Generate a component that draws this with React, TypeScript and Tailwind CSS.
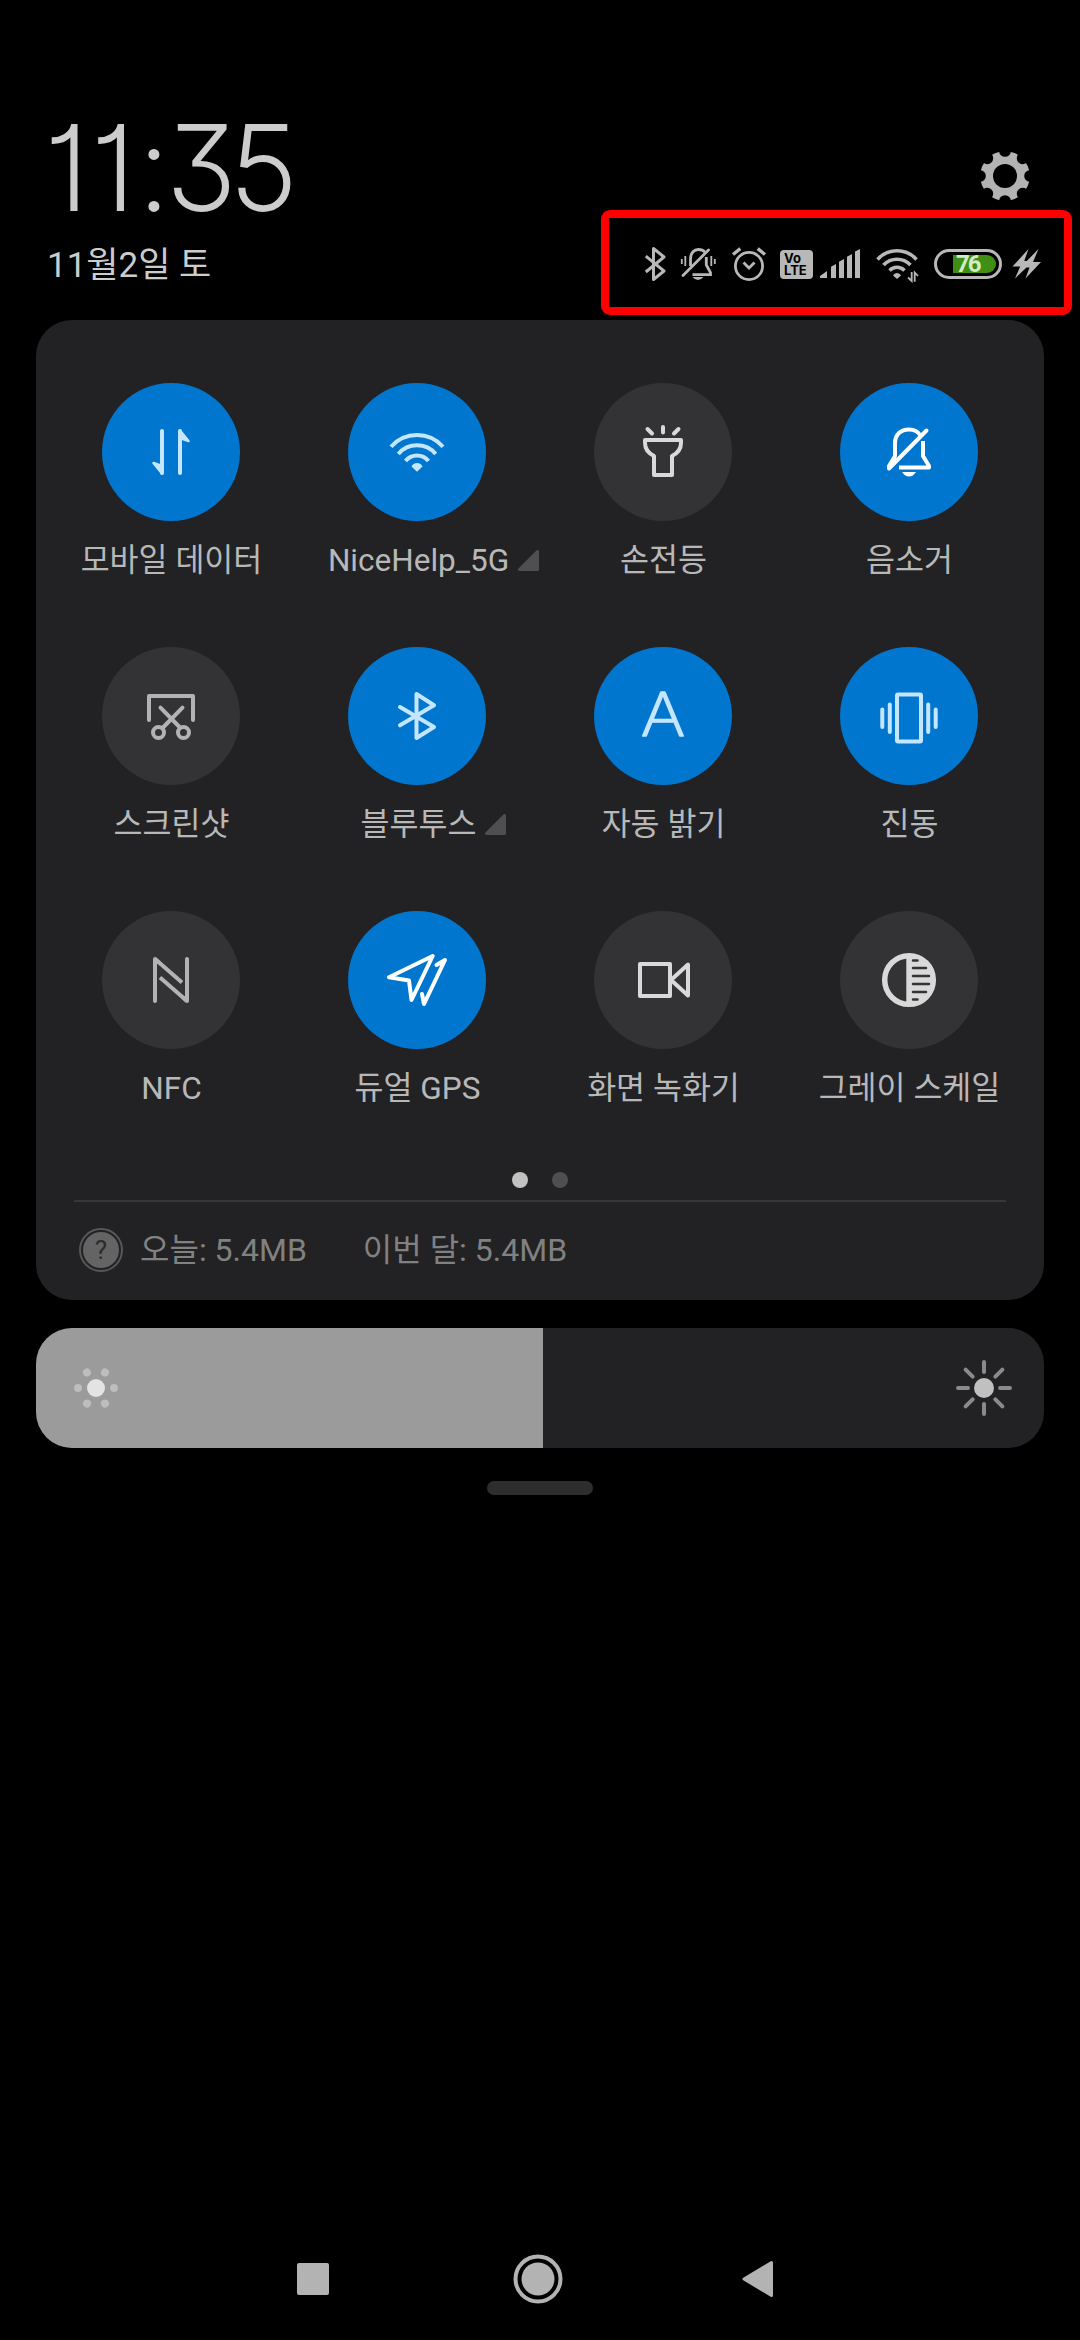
import React from "react";
import clsx from "clsx";

interface Tile {
  label: string;
  icon: React.ReactNode;
  active?: boolean;
  tone: string;
  expandable?: boolean;
}

const tiles: Tile[] = [
  {
    label: "모바일 데이터",
    active: true,
    tone: "text-[#c5e6ff]",
    icon: (
      <>
        <path d="M-9 -21V21M9 21V-21" />
        <path d="M-17.5 11L-9 21.5V14ZM17.5 -11L9 -21.5V-14Z" fill="currentColor" strokeWidth="2.5" />
      </>
    ),
  },
  {
    label: "NiceHelp_5G",
    active: true,
    expandable: true,
    tone: "text-[#c5e6ff]",
    icon: (
      <>
        <path
          d="M-26 -5.3A34.7 34.7 0 0 1 26 -5.3M-18.7 2A24.5 24.5 0 0 1 18.7 2M-11.5 9A14.8 14.8 0 0 1 11.5 9"
          strokeLinecap="butt"
        />
        <path d="M0 19.8L-5.5 14.5Q-4 11 0 11Q4 11 5.5 14.5Z" fill="currentColor" stroke="none" />
      </>
    ),
  },
  {
    label: "손전등",
    tone: "text-[#d9d9d9]",
    icon: (
      <>
        <path d="M-15.5 -23L-11 -18.5M0 -25V-19.5M15.5 -23L11 -18.5" />
        <path d="M-18 -12H18V-9C18 -2 13 2 9 4V23H-9V4C-13 2 -18 -2 -18 -9Z" />
      </>
    ),
  },
  {
    label: "음소거",
    active: true,
    tone: "text-white",
    icon: (
      <>
        <path d="M17.5 -21.5L-20 16.5V14L-14 4V-9C-14 -17.5 -8 -22.5 0 -22.5C5 -22.5 9 -20.5 11.5 -16.5" />
        <path d="M14 -11V4L20 14V15.5H-10" strokeLinecap="butt" />
        <path d="M-7 20H7Q4 24.5 0 24.5Q-4 24.5 -7 20Z" fill="currentColor" stroke="none" />
      </>
    ),
  },
  {
    label: "스크린샷",
    tone: "text-[#b3b3b3]",
    icon: (
      <>
        <path d="M-22 4V-20H22V4" />
        <path d="M-10.5 -8.3L9 11.5M11.5 -8.3L-8 11.5" />
        <circle cx="-12.5" cy="16.5" r="5.5" />
        <circle cx="12.5" cy="16.5" r="5.5" />
      </>
    ),
  },
  {
    label: "블루투스",
    active: true,
    expandable: true,
    tone: "text-[#c5e6ff]",
    icon: <path d="M-17 -9L17 11L-.5 22V-22L17 -10.7L-17 9.3" />,
  },
  {
    label: "자동 밝기",
    active: true,
    tone: "text-[#c5e6ff]",
    icon: (
      <text
        x="0"
        y="20"
        textAnchor="middle"
        fill="currentColor"
        strokeWidth="1.5"
        transform="scale(1.13 1)"
        className="font-['Inter',sans-serif] text-[60px] font-extralight"
      >
        A
      </text>
    ),
  },
  {
    label: "진동",
    active: true,
    tone: "text-[#c5e6ff]",
    icon: (
      <>
        <rect x="-12" y="-21.5" width="24" height="47" rx="1" />
        <path d="M-26.7 -6.5V11M-19.2 -11.5V16M19.2 -11.5V16M26.7 -6.5V11" />
      </>
    ),
  },
  {
    label: "NFC",
    tone: "text-[#b3b3b3]",
    icon: (
      <>
        <path d="M-16 21V-21L-12 -17.5M16 -21V21L12 17.5" />
        <path d="M-16 -21L11 2.5M16 21L-11 -2.5" strokeLinecap="butt" />
      </>
    ),
  },
  {
    label: "듀얼 GPS",
    active: true,
    tone: "text-white",
    icon: (
      <>
        <path d="M15.7 -24L-28 -2.7L-8 .5L-5.5 20Z" />
        <path d="M19.5 -15L28 -20L7 24L5 14" />
      </>
    ),
  },
  {
    label: "화면 녹화기",
    tone: "text-[#d9d9d9]",
    icon: (
      <>
        <rect x="-23" y="-16" width="30" height="32" />
        <path d="M8 0L25 -15.5V15.5Z" />
      </>
    ),
  },
  {
    label: "그레이 스케일",
    tone: "text-[#d9d9d9]",
    icon: (
      <>
        <circle r="24.3" strokeWidth="5.5" />
        <path d="M-2.7 -24H0A24 24 0 0 1 0 24H-2.7Z" fill="currentColor" stroke="none" />
        <path
          d="M4 -19.5H8.5M4 -12H17M4 -4H20M4 4H20M4 12H17M4 19.5H8.5"
          stroke="#333335"
          strokeWidth="2.5"
        />
      </>
    ),
  },
];

const SettingsIcon = () => (
  <svg width="50" height="50" viewBox="-25 -25 50 50">
    <mask id="gear">
      <circle r="24.8" fill="white" />
      <circle r="12" fill="black" />
      {[0, 45, 90, 135, 180, 225, 270, 315].map((angle) => (
        <ellipse key={angle} cy="-24.5" rx="5.8" ry="5.3" fill="black" transform={`rotate(${angle})`} />
      ))}
    </mask>
    <rect x="-25" y="-25" width="50" height="50" fill="#b3b3b3" mask="url(#gear)" />
  </svg>
);

const StatusBar = () => (
  <div className="flex items-start w-[471px] h-[105px] pt-7 pl-[35px] border-8 border-[#ff0000] rounded-[9px] text-[#b8b8b8]">
    <svg width="22" height="36" fill="none" stroke="currentColor" strokeWidth="3" strokeLinejoin="round">
      <path d="M1.8 10.2L20 25L9.5 33.5V2.5L20 11L1.8 26" />
    </svg>
    <svg width="36" height="36" fill="none" stroke="currentColor" strokeWidth="2.8" className="ml-3.5">
      <path d="M3 29.5L28.5 4" strokeLinecap="round" />
      <path d="M10.5 20V13C10.5 7 14 3.5 18.5 3.5C21.5 3.5 23.5 4.5 25 6M26.3 11V19L30.5 26.5V28.7H12.5" />
      <path d="M12.5 31H23.5Q21 34 18 34Q15 34 12.5 31Z" fill="currentColor" stroke="none" />
      <path d="M1.8 13V18M5.3 10V20M31.3 10V20M34.8 13V18" strokeWidth="1.8" />
    </svg>
    <svg width="36" height="36" fill="none" stroke="currentColor" strokeWidth="2.8" className="ml-[15px]">
      <circle cx="18" cy="20" r="13.6" />
      <path d="M2 8.5L9.3 2.6M34 8.5L26.7 2.6" strokeWidth="3.4" />
      <path d="M12.5 16.5L18 22L23.5 16.5" />
    </svg>
    <div className="flex flex-col w-[33px] h-[29px] mt-1 ml-[13px] pl-1 pt-[3px] rounded bg-[#b8b8b8] text-black font-['Inter',sans-serif] font-bold">
      <span className="text-[13px] leading-[11px]">Vo</span>
      <span className="text-[13px] leading-[13px]">LTE</span>
    </div>
    <svg width="41" height="36" fill="currentColor" className="ml-[7px]">
      <path d="M0 30L7 25V32H0ZM11 20.7L16 18V32H11ZM19 15.7L24 13V32H19ZM27 10.7L32 8V32H27ZM35 5.5L40 3V32H35Z" />
    </svg>
    <svg width="43" height="37" fill="none" stroke="currentColor" strokeWidth="3.5" className="ml-[15px]">
      <path d="M1.5 13.5A26 26 0 0 1 40.5 13.5M7.5 19A18.5 18.5 0 0 1 34.5 19M13.5 24.5A10.5 10.5 0 0 1 28.5 24.5" />
      <path d="M21 33L17 29.5Q18 27 21 27Q24 27 25 29.5Z" fill="currentColor" stroke="none" />
      <path d="M35.7 26V35L32 31.5M38.7 35.7V26.5L42 30" strokeWidth="1.8" />
    </svg>
    <div className="flex justify-end w-[68px] h-[30px] mt-[3px] ml-[15px] p-[3px] border-[3px] border-[#b8b8b8] rounded-full">
      <div className="w-[43px] h-[18px] pl-[3px] rounded-l-[1px] rounded-r-full bg-[#3e8f14] text-[#d3ebc6] font-['Roboto',sans-serif] text-[24px] leading-[19px] tracking-[-2px] font-bold">
        76
      </div>
    </div>
    <svg width="29" height="36" fill="currentColor" className="ml-2.5">
      <path d="M16.5 3L.5 20.5H8.2L3 32.5L14.5 21.5H17.5L13.5 32.5L29 16H21L26.5 3L14.8 15H12.2Z" />
    </svg>
  </div>
);

const QuickTile = ({ label, icon, active, tone, expandable }: Tile) => (
  <div className="flex flex-col items-center h-[264px]">
    <div
      className={clsx(
        "flex items-center justify-center size-[138px] rounded-full",
        active ? "bg-[#0076cf]" : "bg-[#333335]",
        tone
      )}
    >
      <svg
        width="72"
        height="72"
        viewBox="-36 -36 72 72"
        fill="none"
        stroke="currentColor"
        strokeWidth="4"
        strokeLinecap="round"
        strokeLinejoin="round"
        className="overflow-visible"
      >
        {icon}
      </svg>
    </div>
    <div
      className={clsx(
        "relative mt-5 text-[31.5px] leading-10 text-[#b8b8b9] whitespace-nowrap",
        expandable ? "ml-[3px]" : "ml-px"
      )}
    >
      {label}
      {expandable && (
        <svg width="21" height="21" className="absolute left-full top-[9px] ml-[9px]">
          <path d="M1.5 19.5L19.5 1.5V19.5Z" fill="#4f4f51" stroke="#4f4f51" strokeWidth="3" strokeLinejoin="round" />
        </svg>
      )}
    </div>
  </div>
);

const Brightness = () => (
  <div className="flex h-[120px] mt-7 rounded-[36px] overflow-hidden bg-[#222224]">
    <div className="flex items-center w-[507px] pl-10 bg-[#9b9b9b]">
      <svg width="40" height="40" viewBox="-20 -20 40 40" className="overflow-visible">
        <circle r="9" fill="#e3e3e3" />
        {[0, 60, 120, 180, 240, 300].map((angle) => (
          <circle key={angle} cx="18" r="4" fill="#bdbdbd" transform={`rotate(${angle})`} />
        ))}
      </svg>
    </div>
    <div className="flex flex-1 items-center justify-end pr-8">
      <svg width="56" height="56" viewBox="-28 -28 56 56">
        <circle r="10" fill="#c0c0c0" />
        {[0, 45, 90, 135, 180, 225, 270, 315].map((angle) => (
          <path
            key={angle}
            d="M16 0H26"
            stroke="#8a8a8b"
            strokeWidth="4"
            strokeLinecap="round"
            transform={`rotate(${angle})`}
          />
        ))}
      </svg>
    </div>
  </div>
);

const NavBar = () => (
  <div className="flex items-center h-[123px] mt-auto pl-[297px] text-[#b3b3b3]">
    <div className="size-8 rounded-[2px] bg-[#b3b3b3]" />
    <svg width="50" height="50" viewBox="-25 -25 50 50" className="ml-[184px]">
      <circle r="22.5" fill="none" stroke="currentColor" strokeWidth="4" />
      <circle r="16.5" fill="currentColor" />
    </svg>
    <svg width="32" height="38" fill="currentColor" stroke="currentColor" className="ml-[179px]">
      <path d="M2 19L29.5 2.5V35.5Z" strokeWidth="3" strokeLinejoin="round" />
    </svg>
  </div>
);

const App = () => {
  return (
    <div className="flex flex-col w-[1080px] h-[2340px] bg-black font-['Roboto','Noto_Sans_CJK_KR',sans-serif]">
      <header className="h-[320px]">
        <div className="flex items-end justify-between h-[210px] pl-[45px] pr-[50px]">
          <div className="font-['Inter',sans-serif] text-[117px] leading-[85px] font-extralight text-[#cccccc] [font-feature-settings:'cv09','cv01'] [-webkit-text-stroke:1.8px_#cccccc]">
            <span className="tracking-[2.5px]">11</span>
            <span className="tracking-[-3.5px]">:</span>
            <span className="tracking-[-6.5px]">3</span>5
          </div>
          <div className="mb-[9px]">
            <SettingsIcon />
          </div>
        </div>
        <div className="flex items-center justify-between pl-[47px] pr-2">
          <div className="mt-[7px] text-[35px] text-[#cccccc]">11월2일 토</div>
          <StatusBar />
        </div>
      </header>

      <main className="px-9">
        <section className="h-[980px] px-3 pt-[63px] rounded-[36px] bg-[#222224]">
          <div className="grid grid-cols-4">
            {tiles.map((tile) => (
              <QuickTile key={tile.label} {...tile} />
            ))}
          </div>
          <div className="flex justify-center gap-6 -mt-[3px]">
            <span className="size-4 rounded-full bg-[#c2c2c2]" />
            <span className="size-4 rounded-full bg-[#4f4f51]" />
          </div>
          <div className="flex items-center h-[98px] mx-[26px] mt-3 pl-[5px] border-t-2 border-[#373739] text-[32px] text-[#818182]">
            <div className="flex items-center justify-center size-11 rounded-full border-2 border-[#57575a]">
              <div className="flex items-center justify-center size-9 rounded-full bg-[#646464] text-[#2b2b2c] text-[26px]">
                ?
              </div>
            </div>
            <span className="ml-[17px]">오늘: 5.4MB</span>
            <span className="ml-14">이번 달: 5.4MB</span>
          </div>
        </section>
        <Brightness />
        <div className="w-[106px] h-3.5 mx-auto mt-[33px] rounded-full bg-[#2d2d2d]" />
      </main>

      <NavBar />
    </div>
  );
};

export default App;
